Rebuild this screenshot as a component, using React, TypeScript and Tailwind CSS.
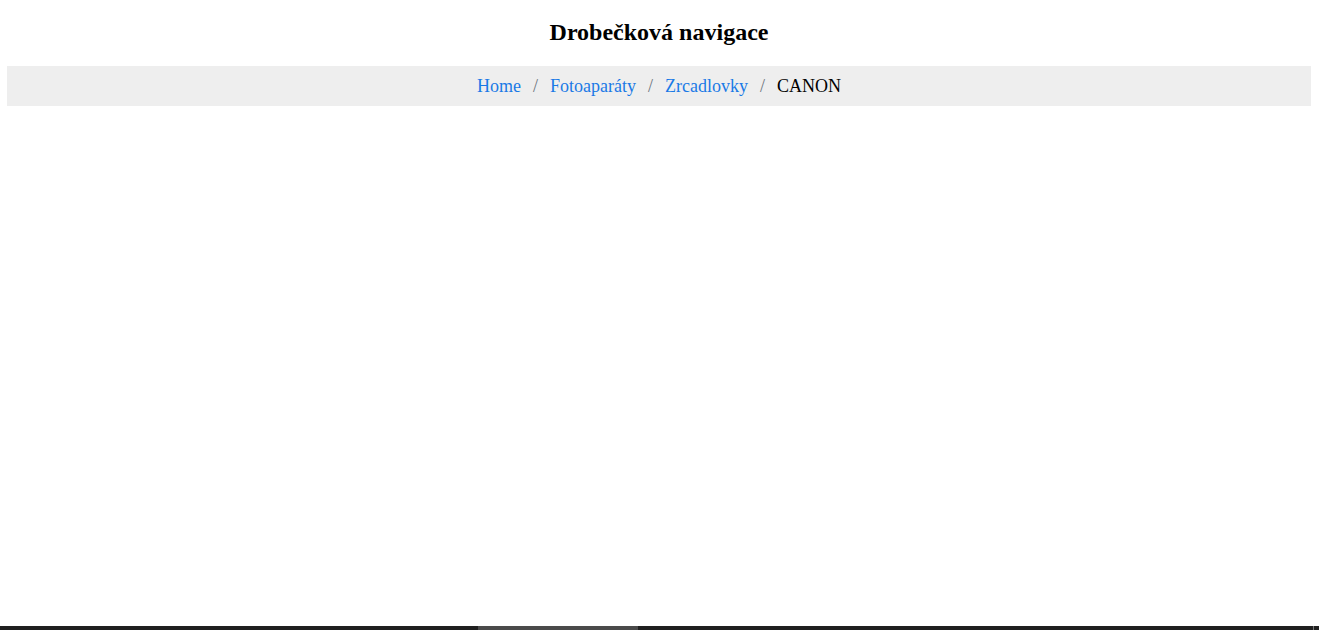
const crumbs = [
  { label: 'Home', href: '#' },
  { label: 'Fotoaparáty', href: '#' },
  { label: 'Zrcadlovky', href: '#' },
  { label: 'CANON' },
]

export default function App() {
  return (
    <div className="min-h-screen bg-white font-['Liberation_Serif',serif] text-black">
      <div className="pl-[7px] pr-2 pt-[18px]">
        <h2 className="text-center text-[24px] font-bold leading-[28px]">Drobečková navigace</h2>
        <nav className="mt-5 flex h-10 items-center justify-center bg-[#eeeeee] text-[18px]">
          {crumbs.map((c, i) => (
            <span key={c.label} className="flex items-center">
              {i > 0 && <span className="px-3 text-[#6c757d]">/</span>}
              {c.href ? (
                <a href={c.href} className="text-[#1a7ae6]">
                  {c.label}
                </a>
              ) : (
                <span>{c.label}</span>
              )}
            </span>
          ))}
        </nav>
      </div>
      <div className="fixed bottom-0 left-0 right-0 flex h-1 bg-[#202020]">
        <div className="ml-[478px] w-[160px] bg-[#4a4a4a]" />
        <div className="ml-auto mr-[5px] w-px bg-[#777777]" />
      </div>
    </div>
  )
}
